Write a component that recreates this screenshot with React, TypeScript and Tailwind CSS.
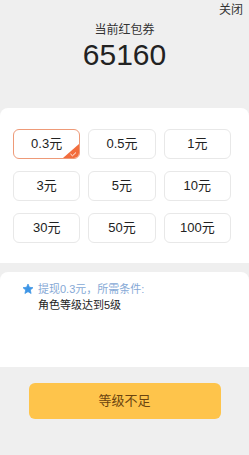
const amounts = ["0.3", "0.5", "1", "3", "5", "10", "30", "50", "100"];

export default function App() {
  const selected = "0.3";

  return (
    <div
      className="flex h-[455px] w-[249px] flex-col bg-[#efefef] text-[#222]"
      style={{ fontFamily: '"Liberation Sans", "Noto Sans CJK SC", sans-serif' }}
    >
      <div className="flex h-[108px] flex-col items-center">
        <div className="flex w-full justify-end pr-[6px] pt-[3px] text-[12px] leading-[14px] text-[#333]">关闭</div>
        <div className="mt-[6px] text-[12px] leading-[14px] text-[#333]">当前红包券</div>
        <div className="mt-[3px] text-[30px] leading-[30px] text-[#222]">65160</div>
      </div>

      <div className="h-[155px] rounded-t-[8px] bg-white px-[13px] pt-[21px]">
        <div className="grid grid-cols-3 gap-x-[8px] gap-y-[12px] pr-[5px]">
          {amounts.map((a) => {
            const on = a === selected;
            return (
              <div
                key={a}
                className={
                  "relative flex h-[30px] items-center justify-center overflow-hidden rounded-[6px] border text-[13px] " +
                  (on ? "border-[#ee9a78]" : "border-[#e8e8e8]")
                }
              >
                {a}元
                {on && (
                  <svg className="absolute bottom-0 right-0" width="16" height="14" viewBox="0 0 16 14">
                    <path d="M16 0 V14 H0 Z" fill="#f26d3d" />
                    <path d="M7.5 10 L9.5 11.8 L13 8.5" stroke="#fff" strokeWidth="0.9" fill="none" />
                  </svg>
                )}
              </div>
            );
          })}
        </div>
      </div>

      <div className="mt-[9px] h-[95px] rounded-t-[8px] bg-white px-[22px] pt-[10px]">
        <div className="flex items-center gap-[4px] text-[11px] leading-[14px] text-[#86a9d6]">
          <svg width="12" height="12" viewBox="0 0 24 24">
            <path
              d="M12 2 L14.9 8.6 L22 9.3 L16.6 14 L18.2 21 L12 17.3 L5.8 21 L7.4 14 L2 9.3 L9.1 8.6 Z"
              fill="#3d95e6"
              strokeLinejoin="round"
              stroke="#3d95e6"
              strokeWidth="1.5"
            />
          </svg>
          <span>提现0.3元，所需条件:</span>
        </div>
        <div className="mt-[2px] pl-[16px] text-[11px] leading-[14px] text-[#222]">角色等级达到5级</div>
      </div>

      <div className="flex justify-center pt-[16px]">
        <div className="flex h-[36px] w-[192px] items-center justify-center rounded-[6px] bg-[#fec44b] text-[13px] text-[#6b4410]">
          等级不足
        </div>
      </div>
    </div>
  );
}
